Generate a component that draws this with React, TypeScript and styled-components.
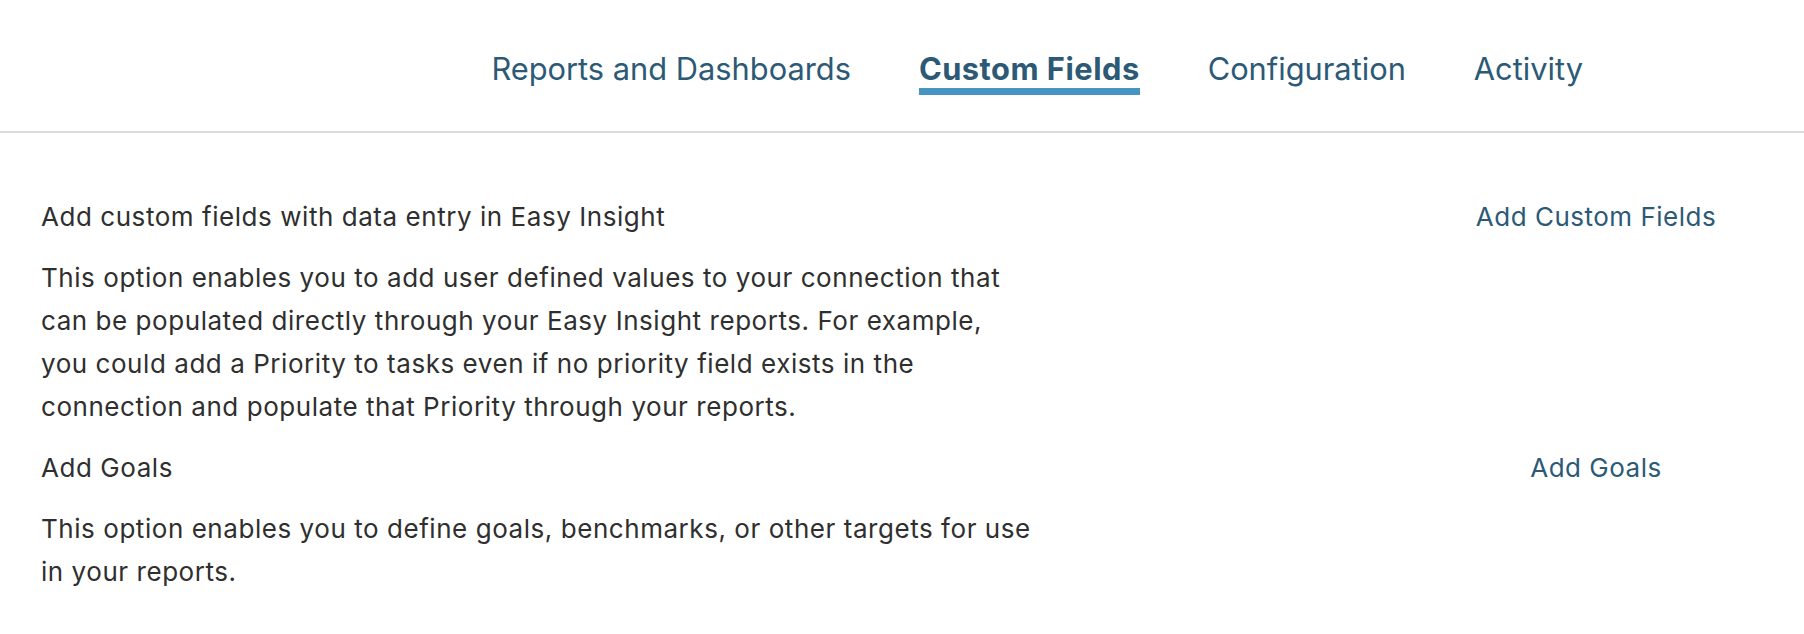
import React from "react";
import styled, { createGlobalStyle } from "styled-components";

const GlobalStyle = createGlobalStyle`
  html, body { margin: 0; padding: 0; background: #ffffff; }
  body { font-family: Inter, "Noto Sans", "Liberation Sans", sans-serif; -webkit-font-smoothing: antialiased; }
  * { box-sizing: border-box; }
`;

const Page = styled.div`
  width: 100%;
  min-height: 634px;
  background: #ffffff;
`;

const Header = styled.nav`
  display: flex;
  justify-content: flex-end;
  align-items: flex-start;
  gap: 68px;
  padding: 50px 221px 36px 0;
  border-bottom: 2px solid #dcdcdc;
`;

const NavItem = styled.a<{ $active?: boolean }>`
  font-size: 30.8px;
  line-height: 38px;
  color: #2c5a76;
  font-weight: ${(p) => (p.$active ? 700 : 400)};
  letter-spacing: ${(p) => (p.$active ? "0.5px" : "0")};
  text-decoration: none;
  border-bottom: 7px solid ${(p) => (p.$active ? "#4694c1" : "transparent")};
  cursor: pointer;
  white-space: nowrap;
`;

const Content = styled.main`
  display: flex;
  flex-direction: column;
  gap: 18px;
  padding: 62px 0 40px 41px;
`;

const Section = styled.section`
  display: grid;
  grid-template-columns: 1fr 416px;
  row-gap: 18px;
`;

const Title = styled.div`
  font-size: 26px;
  line-height: 43px;
  letter-spacing: 0.55px;
  color: #2f2f2f;
`;

const Description = styled.p`
  grid-column: 1;
  margin: 0;
  font-size: 26px;
  line-height: 43px;
  letter-spacing: 0.55px;
  color: #2f2f2f;
`;

const Line = styled.span`
  display: block;
`;

const ActionLink = styled.a`
  justify-self: center;
  font-size: 26px;
  line-height: 43px;
  letter-spacing: 0.5px;
  color: #2c5a76;
  text-decoration: none;
  cursor: pointer;
  white-space: nowrap;
`;

const tabs = [
  { label: "Reports and Dashboards" },
  { label: "Custom Fields", active: true },
  { label: "Configuration" },
  { label: "Activity" },
];

const sections = [
  {
    title: "Add custom fields with data entry in Easy Insight",
    action: "Add Custom Fields",
    lines: [
      "This option enables you to add user defined values to your connection that",
      "can be populated directly through your Easy Insight reports. For example,",
      "you could add a Priority to tasks even if no priority field exists in the",
      "connection and populate that Priority through your reports.",
    ],
  },
  {
    title: "Add Goals",
    action: "Add Goals",
    lines: [
      "This option enables you to define goals, benchmarks, or other targets for use",
      "in your reports.",
    ],
  },
];

export default function App() {
  return (
    <Page>
      <GlobalStyle />
      <Header>
        {tabs.map((t) => (
          <NavItem key={t.label} $active={t.active}>
            {t.label}
          </NavItem>
        ))}
      </Header>
      <Content>
        {sections.map((s) => (
          <Section key={s.title}>
            <Title>{s.title}</Title>
            <ActionLink>{s.action}</ActionLink>
            <Description>
              {s.lines.map((l) => (
                <Line key={l}>{l}</Line>
              ))}
            </Description>
          </Section>
        ))}
      </Content>
    </Page>
  );
}
